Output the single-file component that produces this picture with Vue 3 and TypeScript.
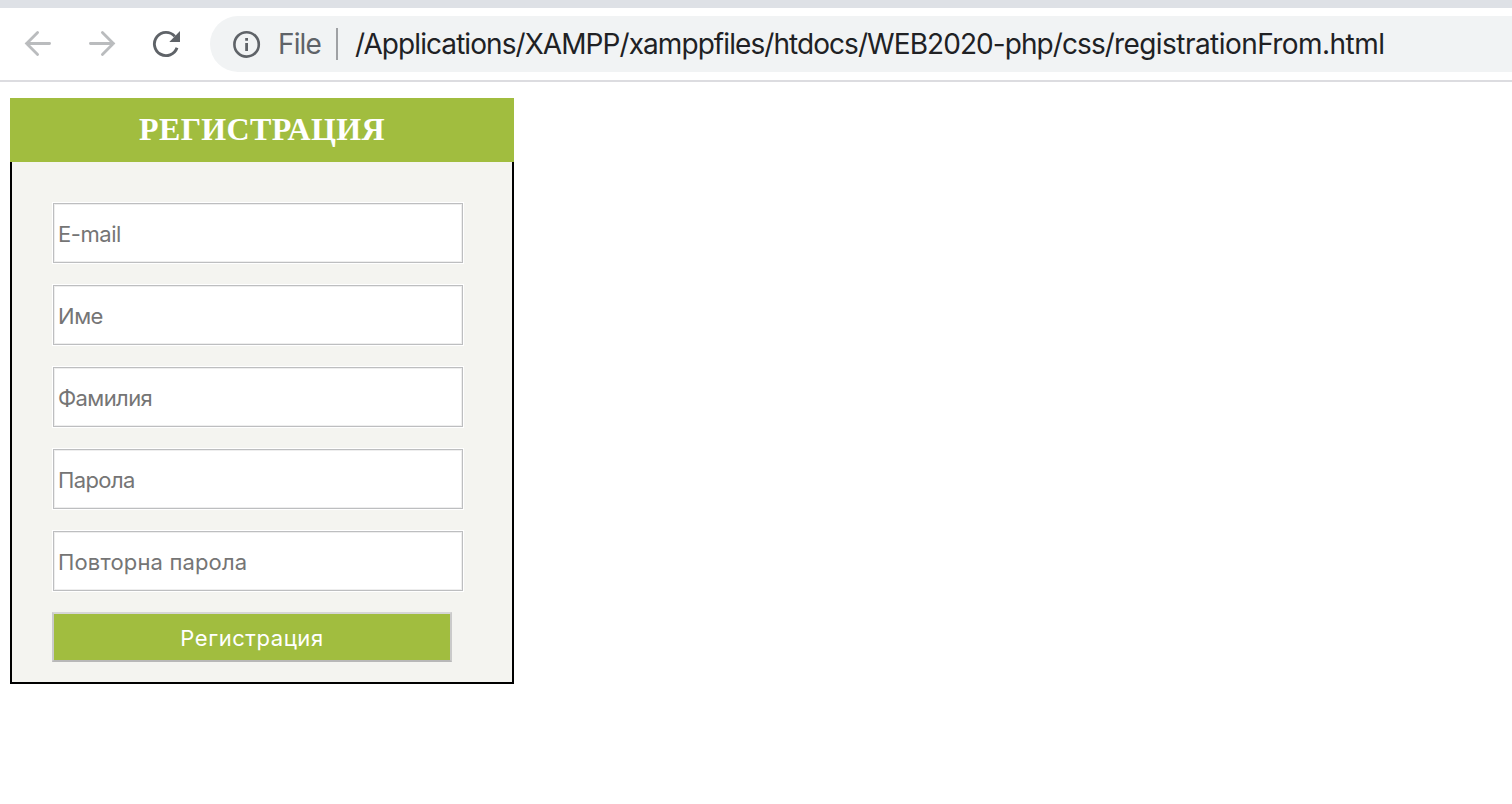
<script setup lang="ts">
interface Field {
  name: string
  label: string
  type: string
}

const directory = '/Applications/XAMPP/xamppfiles/htdocs/WEB2020-php/css/'
const file = 'registrationFrom.html'

const fields: Field[] = [
  { name: 'email', label: 'E-mail', type: 'text' },
  { name: 'first', label: 'Име', type: 'text' },
  { name: 'last', label: 'Фамилия', type: 'text' },
  { name: 'password', label: 'Парола', type: 'password' },
  { name: 'repeat', label: 'Повторна парола', type: 'password' },
]
</script>

<template>
  <div class="window">
    <div class="tabstrip"></div>
    <header class="toolbar">
      <nav class="nav">
        <svg class="icon" viewBox="0 0 32 32">
          <path class="arrow" d="M17.6 4.4 6.6 15.5 17.6 26.6M6.6 15.5H29.6" />
        </svg>
        <svg class="icon" viewBox="0 0 32 32">
          <path class="arrow" d="M18.4 4.4 29.4 15.5 18.4 26.6M29.4 15.5H6.4" />
        </svg>
        <svg class="icon" viewBox="0 0 32 32">
          <path class="reload" d="M29 19.8A11.6 11.6 0 1 1 26.8 8.4" />
          <path class="tip" d="M32 3V14H21.3Z" />
        </svg>
      </nav>
      <div class="omnibox">
        <svg class="info" viewBox="0 0 28 28">
          <circle cx="13.6" cy="14.4" r="12.2" />
          <path d="M12.2 13h2.8v8h-2.8zM12.2 8h2.8v2.8h-2.8z" />
        </svg>
        <span class="scheme">File</span>
        <span class="divider"></span>
        <span class="path">{{ directory }}<span class="file">{{ file }}</span></span>
      </div>
    </header>
    <main class="page" lang="bg">
      <form class="card" @submit.prevent>
        <h1 class="title">РЕГИСТРАЦИЯ</h1>
        <div class="body">
          <input
            v-for="f in fields"
            :key="f.name"
            class="field"
            :class="f.name"
            :type="f.type"
            :placeholder="f.label"
          />
          <button class="submit" type="submit">Регистрация</button>
        </div>
      </form>
    </main>
  </div>
</template>

<style>
body {
  background: #fff;
}
</style>

<style scoped>
.window {
  height: 804px;
  overflow: hidden;
  background: #fff;
  font-family: Inter, "Liberation Sans", sans-serif;
}
.tabstrip {
  height: 8px;
  background: #dee1e6;
}
.toolbar {
  display: flex;
  box-sizing: border-box;
  height: 74px;
  padding-top: 8px;
  border-bottom: 2px solid #dcdce0;
}
.nav {
  display: flex;
  flex: none;
  align-items: center;
  gap: 32px;
  box-sizing: border-box;
  width: 210px;
  height: 56px;
  padding-left: 20px;
}
.icon {
  width: 32px;
  height: 32px;
  flex: none;
}
.arrow {
  fill: none;
  stroke: #babcbe;
  stroke-width: 2.8;
  stroke-linecap: round;
}
.reload {
  fill: none;
  stroke: #5f6368;
  stroke-width: 2.9;
  stroke-linecap: butt;
}
.tip {
  fill: #5f6368;
}
.omnibox {
  display: flex;
  align-items: center;
  flex: 1;
  min-width: 0;
  height: 56px;
  padding-left: 23px;
  border-radius: 28px 0 0 28px;
  background: #f1f3f4;
  font-size: 28px;
  line-height: 56px;
  white-space: nowrap;
}
.info {
  flex: none;
  width: 28px;
  height: 28px;
}
.info circle {
  fill: none;
  stroke: #5f6368;
  stroke-width: 2.6;
}
.info path {
  fill: #5f6368;
}
.scheme {
  flex: none;
  width: 58px;
  padding-left: 17px;
  color: #5f6368;
  letter-spacing: -0.9px;
}
.divider {
  flex: none;
  width: 2px;
  height: 32px;
  margin-right: 17px;
  background: #9fa1a4;
}
.path {
  color: #202124;
  letter-spacing: -0.93px;
}
.file {
  letter-spacing: -0.55px;
}
.page {
  padding: 16px 10px;
}
.card {
  box-sizing: border-box;
  width: 504px;
  height: 586px;
}
.title {
  margin: 0;
  height: 64px;
  background: #a1bd3f;
  color: #fff;
  font: bold 32px/62px "Liberation Serif", serif;
  letter-spacing: 0.35px;
  text-align: center;
}
.body {
  display: flex;
  flex-direction: column;
  gap: 20px;
  box-sizing: border-box;
  height: 522px;
  padding: 40px 0 0 40px;
  border: 2px solid #000;
  border-top: 0;
  background: #f4f4f0;
}
.field {
  box-sizing: border-box;
  width: 412px;
  height: 62px;
  margin: 0;
  padding: 2px 4px 0 5px;
  border: 1px solid #fff;
  border-radius: 0;
  outline: 0;
  background: #fff;
  box-shadow: inset 0 0 0 1px #bdbec0, inset 0 0 0 2px #eee;
  font: 22px Inter, sans-serif;
  letter-spacing: -0.45px;
}
.field.last,
.field.password {
  letter-spacing: -0.6px;
}
.field.repeat {
  letter-spacing: 0.15px;
}
.field::placeholder {
  color: #757575;
  opacity: 1;
}
.submit {
  box-sizing: border-box;
  width: 400px;
  height: 50px;
  margin: 0;
  padding: 2px 0 0;
  border: 2px solid;
  border-color: #d6d6d6 #cacaca #b8b8b8 #cacaca;
  background: #a1bd3f;
  color: #fff;
  font: 22px Inter, sans-serif;
  letter-spacing: 0.55px;
}
</style>
